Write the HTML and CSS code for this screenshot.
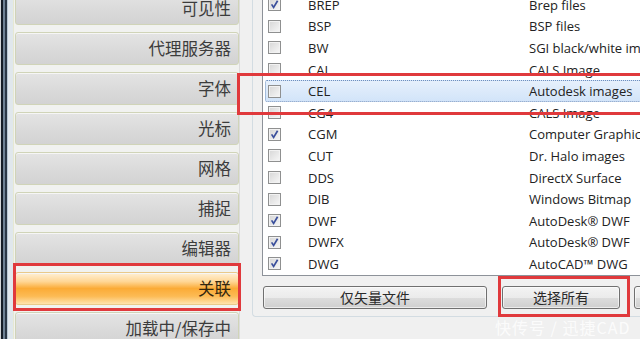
FILE: index.html
```html
<!DOCTYPE html>
<html>

<head>
    <title>选项 - 关联</title>
    <link rel="stylesheet" href="styles.css">
</head>

<body>

    <div class="window">
        <div class="edge"></div>

        <nav class="nav">
            <div class="nav-btn">可见性</div>
            <div class="nav-btn">代理服务器</div>
            <div class="nav-btn">字体</div>
            <div class="nav-btn">光标</div>
            <div class="nav-btn">网格</div>
            <div class="nav-btn">捕捉</div>
            <div class="nav-btn">编辑器</div>
            <div class="nav-btn active">关联</div>
            <div class="nav-btn">加载中/保存中</div>
        </nav>

        <div class="split"></div>

        <section class="group">
            <div class="list">
                <div class="row"><span class="chk on"><svg viewBox="0 0 11 11" width="11" height="11"><path d="M2.6 5.4 L4.6 8.4 L8.6 1.8" /></svg></span><span class="name">BREP</span><span class="desc">Brep files</span></div>
                <div class="row"><span class="chk"></span><span class="name">BSP</span><span class="desc">BSP files</span></div>
                <div class="row"><span class="chk"></span><span class="name">BW</span><span class="desc">SGI black/white image</span></div>
                <div class="row"><span class="chk"></span><span class="name">CAL</span><span class="desc">CALS Image</span></div>
                <div class="row sel"><span class="chk"></span><span class="name">CEL</span><span class="desc">Autodesk images</span></div>
                <div class="row"><span class="chk"></span><span class="name">CG4</span><span class="desc">CALS Image</span></div>
                <div class="row"><span class="chk on"><svg viewBox="0 0 11 11" width="11" height="11"><path d="M2.6 5.4 L4.6 8.4 L8.6 1.8" /></svg></span><span class="name">CGM</span><span class="desc">Computer Graphics Metafile</span></div>
                <div class="row"><span class="chk"></span><span class="name">CUT</span><span class="desc">Dr. Halo images</span></div>
                <div class="row"><span class="chk"></span><span class="name">DDS</span><span class="desc">DirectX Surface</span></div>
                <div class="row"><span class="chk"></span><span class="name">DIB</span><span class="desc">Windows Bitmap</span></div>
                <div class="row"><span class="chk on"><svg viewBox="0 0 11 11" width="11" height="11"><path d="M2.6 5.4 L4.6 8.4 L8.6 1.8" /></svg></span><span class="name">DWF</span><span class="desc">AutoDesk® DWF</span></div>
                <div class="row"><span class="chk on"><svg viewBox="0 0 11 11" width="11" height="11"><path d="M2.6 5.4 L4.6 8.4 L8.6 1.8" /></svg></span><span class="name">DWFX</span><span class="desc">AutoDesk® DWF</span></div>
                <div class="row"><span class="chk on"><svg viewBox="0 0 11 11" width="11" height="11"><path d="M2.6 5.4 L4.6 8.4 L8.6 1.8" /></svg></span><span class="name">DWG</span><span class="desc">AutoCAD™ DWG</span></div>
            </div>

            <div class="actions">
                <button class="btn wide">仅矢量文件</button>
                <button class="btn">选择所有</button>
                <button class="btn last"></button>
            </div>
        </section>
    </div>

    <!-- red annotation frames drawn over the screenshot -->
    <div class="mark mark-nav"></div>
    <div class="mark mark-row"></div>
    <div class="mark mark-btn"></div>

    <div class="watermark">快传号 / 迅捷CAD</div>

</body>

</html>
```

FILE: styles.css
```css
body {
    margin: 0;
    width: 640px;
    height: 339px;
    overflow: hidden;
    position: relative;
    background-color: #f0f0f0;
    font-family: "Open Sans", "Noto Sans CJK SC", sans-serif;
}

.window {
    display: flex;
    width: 800px;
    height: 339px;
}

.edge {
    width: 14px;
    flex: none;
    background: linear-gradient(to right, #d3d6d8 0 1px, #151d26 1px 3px, #6e8193 3px 5px, #2a3745 5px 7px, #b9c8d4 7px 8px, #e0e7ec 8px 13px, #e6e8d2 13px 14px);
}

.nav {
    width: 224px;
    flex: none;
    padding-left: 1px;
    margin-top: -8px;
    display: flex;
    flex-direction: column;
    gap: 7px;
    background-color: #f1f2f0;
}

.nav-btn {
    flex: none;
    height: 33px;
    box-sizing: border-box;
    border: 1px solid #d0d4b8;
    border-radius: 3px;
    background: linear-gradient(#e4e4e4, #dadada 55%, #d3d3d3);
    box-shadow: inset 0 1px 0 #f6f6f6;
    text-align: right;
    padding-right: 7px;
    font-family: "Noto Sans CJK SC", sans-serif;
    font-size: 16.5px;
    line-height: 31px;
    color: #3c3c3c;
}

.nav-btn.active {
    border-color: #e9c98a;
    background: linear-gradient(#fff0d6 0%, #ffd694 28%, #fbab36 50%, #fcbb55 75%, #ffe2ad 100%);
    color: #33270f;
}

.split {
    width: 13px;
    flex: none;
    box-sizing: border-box;
    border-left: 1px solid #dcdcdc;
}

.group {
    width: 520px;
    flex: none;
    height: 317px;
    box-sizing: border-box;
    border-left: 1px solid #d3dce2;
    border-bottom: 1px solid #d3dce2;
    border-bottom-left-radius: 4px;
    padding-left: 9px;
}

.list {
    margin-top: -7px;
    height: 283px;
    box-sizing: border-box;
    border: 1px solid #8d9299;
    background-color: #fff;
    overflow: hidden;
}

.row {
    display: flex;
    align-items: center;
    height: 21.6px;
    box-sizing: border-box;
    margin: 0 2px;
    padding-left: 2px;
    border: 1px solid transparent;
    white-space: nowrap;
    font-size: 13px;
    color: #222;
}

.row.sel {
    border: 1px dotted #6f8fbd;
    border-radius: 2px;
    background: linear-gradient(#e6f0fc, #d2e4f9);
}

.chk {
    width: 13px;
    height: 13px;
    flex: none;
    margin-right: 27px;
    box-sizing: border-box;
    border: 1px solid #8f9090;
    background: linear-gradient(135deg, #d6d6d6, #f7f7f7);
    box-shadow: inset 0 0 0 1px #f2f2f2;
    display: flex;
    align-items: center;
    justify-content: center;
}

.chk svg path {
    fill: none;
    stroke: #3a4f9c;
    stroke-width: 1.7;
}

.name {
    width: 221px;
    flex: none;
}

.actions {
    display: flex;
    gap: 15px;
    margin-top: 10px;
    padding-left: 1px;
}

.btn {
    width: 118px;
    height: 23px;
    box-sizing: border-box;
    padding: 0;
    border: 1px solid #707070;
    border-radius: 3px;
    background: linear-gradient(#f3f3f3 0%, #ebebeb 50%, #dddddd 50%, #cfcfcf 100%);
    box-shadow: inset 0 0 0 1px rgba(255, 255, 255, 0.6);
    font-family: "Noto Sans CJK SC", sans-serif;
    font-size: 14px;
    line-height: 21px;
    color: #2a2a2a;
}

.btn.wide {
    width: 224px;
}

.btn.last {
    margin-left: -1px;
}

.mark {
    position: absolute;
    box-sizing: border-box;
    border: 3px solid #e0393c;
}

.mark-nav {
    left: 13px;
    top: 263px;
    width: 228px;
    height: 48px;
}

.mark-row {
    left: 237px;
    top: 73px;
    width: 420px;
    height: 42px;
}

.mark-btn {
    left: 498px;
    top: 276px;
    width: 132px;
    height: 41px;
}

.watermark {
    position: absolute;
    left: 495px;
    top: 315px;
    font-family: "Noto Sans CJK SC", sans-serif;
    font-size: 16px;
    letter-spacing: 1px;
    white-space: nowrap;
    color: rgba(255, 255, 255, 0.8);
}
```
